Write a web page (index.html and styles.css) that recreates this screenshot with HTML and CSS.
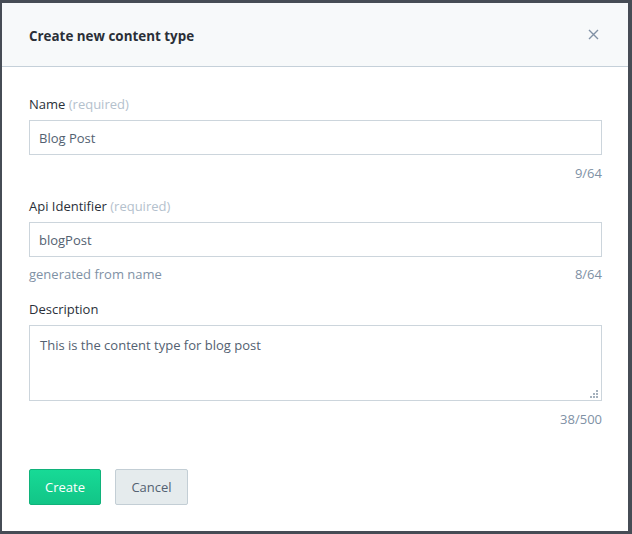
FILE: index.html
```html
<!DOCTYPE html>
<html>
<head>
<meta charset="utf-8">
<link rel="stylesheet" href="styles.css">
</head>
<body>
<div class="modal">
  <div class="modal-header">
    <h1 class="title">Create new content type</h1>
    <button class="close" aria-label="Close">
      <svg width="11" height="11" viewBox="0 0 11 11"><path d="M1 1L10 10M10 1L1 10" stroke="#8091a5" stroke-width="1.4" fill="none"/></svg>
    </button>
  </div>
  <div class="modal-body">
    <div class="field field-name">
      <label class="label">Name <span class="hint">(required)</span></label>
      <input class="input" type="text" value="Blog Post">
      <div class="meta"><span></span><span class="count">9/64</span></div>
    </div>
    <div class="field field-api">
      <label class="label">Api Identifier <span class="hint">(required)</span></label>
      <input class="input" type="text" value="blogPost">
      <div class="meta"><span class="help">generated from name</span><span class="count">8/64</span></div>
    </div>
    <div class="field field-desc">
      <label class="label">Description</label>
      <div class="textarea-wrap">
        <textarea class="textarea">This is the content type for blog post</textarea>
        <svg class="grip" width="9" height="9" viewBox="0 0 9 9">
          <rect x="6" y="0" width="2" height="2" fill="#a4b1bd"/>
          <rect x="3" y="3" width="2" height="2" fill="#a4b1bd"/>
          <rect x="6" y="3" width="2" height="2" fill="#a4b1bd"/>
          <rect x="0" y="6" width="2" height="2" fill="#a4b1bd"/>
          <rect x="3" y="6" width="2" height="2" fill="#a4b1bd"/>
          <rect x="6" y="6" width="2" height="2" fill="#a4b1bd"/>
        </svg>
      </div>
      <div class="meta"><span></span><span class="count">38/500</span></div>
    </div>
    <div class="actions">
      <button class="btn btn-primary">Create</button>
      <button class="btn btn-secondary">Cancel</button>
    </div>
  </div>
</div>
</body>
</html>
```

FILE: styles.css
```css
* { box-sizing: border-box; }
html, body { margin: 0; padding: 0; }
body {
  background: #464c55;
  font-family: "Open Sans", "Noto Sans", sans-serif;
  font-size: 13px;
  width: 632px;
  height: 534px;
  overflow: hidden;
}
.modal {
  margin: 3px 0 0 2px;
  width: 626px;
  height: 528px;
  background: #fff;
  display: flex;
  flex-direction: column;
}
.modal-header {
  height: 64px;
  background: #f7f9fa;
  border-bottom: 1px solid #c5d0d9;
  display: flex;
  align-items: center;
  justify-content: space-between;
  padding: 0 29px 0 27px;
}
.title {
  margin: 0;
  font-size: 13.4px;
  font-weight: 700;
  color: #2a2f37;
  position: relative;
  top: 1px;
}
.close {
  border: 0;
  background: none;
  padding: 0;
  width: 11px;
  height: 11px;
  display: flex;
  cursor: pointer;
}
.modal-body {
  padding: 27px 26px 0 27px;
  display: flex;
  flex-direction: column;
}
.field { display: flex; flex-direction: column; }
.label {
  line-height: 20px;
  color: #2a3039;
  margin-bottom: 6px;
}
.hint { color: #b4c1cd; }
.input {
  height: 35px;
  border: 1px solid #ccd5dc;
  padding: 0 9px;
  font-family: inherit;
  font-size: 13px;
  color: #536171;
  outline: none;
  background: #fff;
}
.meta {
  display: flex;
  justify-content: space-between;
  line-height: 18px;
  margin-top: 9px;
}
.count, .help { color: #8091a5; }
.field-api { margin-top: 14px; }
.field-api .meta { margin-top: 8px; }
.field-desc { margin-top: 16px; }
.textarea-wrap { position: relative; }
.textarea {
  display: block;
  width: 100%;
  height: 76px;
  border: 1px solid #ccd5dc;
  padding: 10px 10px;
  font-family: inherit;
  font-size: 13px;
  line-height: 18px;
  color: #536171;
  resize: none;
  outline: none;
}
.grip {
  position: absolute;
  right: 3px;
  bottom: 2px;
}
.actions {
  display: flex;
  gap: 14px;
  margin-top: 41px;
}
.btn {
  height: 36px;
  font-family: inherit;
  font-size: 13px;
  padding: 0;
  cursor: pointer;
}
.btn-primary {
  width: 72px;
  color: #fff;
  background: linear-gradient(#17da96, #12c587);
  border: 1px solid #10b27a;
  border-radius: 2px;
}
.btn-secondary {
  width: 73px;
  color: #536171;
  background: #e5ebed;
  border: 1px solid #c3ced5;
  border-radius: 2px;
}
```
